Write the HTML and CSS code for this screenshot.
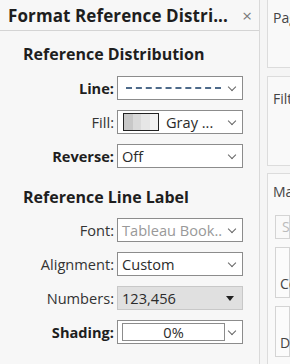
FILE: index.html
```html
<!DOCTYPE html>
<html lang="en">
<head>
  <meta charset="UTF-8" />
  <title>Format Reference Distribution</title>
  <link rel="stylesheet" href="styles.css">
</head>
<body>
<div class="layout">
  <div class="format-pane">
    <div class="pane-header">
      <span class="pane-title">Format Reference Distri...</span>
      <span class="close">×</span>
    </div>

    <h2 class="section-title">Reference Distribution</h2>
    <div class="form-row">
      <label class="bold">Line:</label>
      <div class="dropdown">
        <span class="dash-line"></span>
        <span class="chev"></span>
      </div>
    </div>
    <div class="form-row">
      <label>Fill:</label>
      <div class="dropdown">
        <span class="swatch"><i></i><i></i><i></i><i></i></span>
        <span class="value">Gray ...</span>
        <span class="chev"></span>
      </div>
    </div>
    <div class="form-row">
      <label class="bold">Reverse:</label>
      <div class="dropdown">
        <span class="value">Off</span>
        <span class="chev"></span>
      </div>
    </div>

    <h2 class="section-title second">Reference Line Label</h2>
    <div class="form-row first">
      <label>Font:</label>
      <div class="dropdown">
        <span class="value muted">Tableau Book..</span>
        <span class="chev"></span>
      </div>
    </div>
    <div class="form-row">
      <label>Alignment:</label>
      <div class="dropdown">
        <span class="value">Custom</span>
        <span class="chev"></span>
      </div>
    </div>
    <div class="form-row">
      <label>Numbers:</label>
      <div class="dropdown filled">
        <span class="value">123,456</span>
        <span class="caret"></span>
      </div>
    </div>
    <div class="form-row">
      <label class="bold">Shading:</label>
      <div class="dropdown">
        <span class="shade-box">0%</span>
        <span class="chev"></span>
      </div>
    </div>
  </div>

  <div class="side">
    <div class="card top"><span>Pages</span></div>
    <div class="card filters"><span>Filters</span></div>
    <div class="card marks">
      <span>Marks</span>
      <div class="mark-btn">Square</div>
      <div class="mark-box"><span>Color</span></div>
      <div class="mark-box"><span>Detail</span></div>
    </div>
  </div>
</div>
</body>
</html>
```

FILE: styles.css
```css
body {
  margin: 0;
  font-family: "Open Sans", Lato, sans-serif;
  background: #f5f5f5;
  color: #2b2b2b;
  overflow: hidden;
}
.layout {
  display: flex;
  height: 364px;
}
.format-pane {
  width: 259px;
  flex: none;
  border-right: 1px solid #d9d9d9;
  background: #f7f7f7;
}
.pane-header {
  height: 30px;
  border-bottom: 1px solid #d4d4d4;
  display: flex;
  align-items: center;
  justify-content: space-between;
  padding: 0 7px 0 8px;
}
.pane-title {
  font-size: 17px;
  font-weight: bold;
  color: #1e1e1e;
  white-space: nowrap;
  letter-spacing: 0.1px;
}
.close {
  font-size: 17px;
  color: #7a7a7a;
}
.section-title {
  margin: 11px 0 10px 23px;
  font-size: 16px;
  line-height: 24px;
  font-weight: bold;
  color: #1e1e1e;
}
.section-title.second {
  margin-top: 17px;
  margin-bottom: 9px;
}
.form-row {
  display: flex;
  align-items: center;
  height: 24px;
  margin-bottom: 10px;
}
.form-row label {
  width: 117px;
  padding-right: 3px;
  box-sizing: border-box;
  text-align: right;
  font-size: 14.6px;
  color: #333;
  white-space: nowrap;
}
.form-row label.bold {
  font-weight: bold;
  color: #1e1e1e;
}
.dropdown {
  width: 126px;
  height: 24px;
  border: 1px solid #8c8c8c;
  background: #fff;
  display: flex;
  align-items: center;
  padding: 0 4px;
  box-sizing: border-box;
}
.dropdown.filled {
  background: #e0e0e0;
  border-color: #c8c8c8;
}
.value {
  font-size: 14.6px;
  color: #2b2b2b;
  white-space: nowrap;
}
.value.muted {
  color: #999;
}
.chev {
  margin-left: auto;
  width: 5px;
  height: 5px;
  border-right: 1px solid #666;
  border-bottom: 1px solid #666;
  transform: rotate(45deg);
  margin-right: 3px;
  margin-top: -3px;
  flex: none;
}
.caret {
  margin-left: auto;
  margin-right: 4px;
  border-left: 4px solid transparent;
  border-right: 4px solid transparent;
  border-top: 5px solid #222;
}
.dash-line {
  width: 95px;
  margin-left: 4px;
  border-top: 2px dashed #4d6a8a;
}
.swatch {
  display: flex;
  width: 34px;
  height: 16px;
  border: 1px solid #222;
  margin: 0 7px 0 1px;
  flex: none;
}
.swatch i { flex: 1; }
.swatch i:nth-child(1) { background: #c8c8c8; }
.swatch i:nth-child(2) { background: #dadada; }
.swatch i:nth-child(3) { background: #e6e6e6; }
.swatch i:nth-child(4) { background: #f2f2f2; }
.shade-box {
  width: 101px;
  height: 16px;
  border: 1px solid #8c8c8c;
  font-size: 14.6px;
  line-height: 16px;
  text-align: center;
  color: #2b2b2b;
  flex: none;
}
.side {
  flex: 1;
  padding-left: 7px;
  overflow: hidden;
}
.card {
  border: 1px solid #dcdcdc;
  border-right: none;
  background: #f9f9f9;
  font-size: 14px;
  color: #444;
  padding: 8px 0 0 5px;
  white-space: nowrap;
  overflow: hidden;
  box-sizing: border-box;
}
.card.top {
  border-top: none;
  height: 68px;
  margin-bottom: 8px;
}
.card.filters {
  height: 90px;
  margin-bottom: 7px;
  padding-top: 12px;
}
.card.marks {
  height: 200px;
  padding-top: 8px;
}
.mark-btn {
  margin-top: 14px;
  margin-left: 2px;
  height: 22px;
  border: 1px solid #d4d4d4;
  color: #bbb;
  padding-left: 6px;
  line-height: 22px;
}
.mark-box {
  margin-top: 8px;
  margin-left: 2px;
  height: 51px;
  border: 1px solid #d4d4d4;
  padding: 26px 0 0 4px;
  box-sizing: border-box;
  background: #fbfbfb;
}
```
